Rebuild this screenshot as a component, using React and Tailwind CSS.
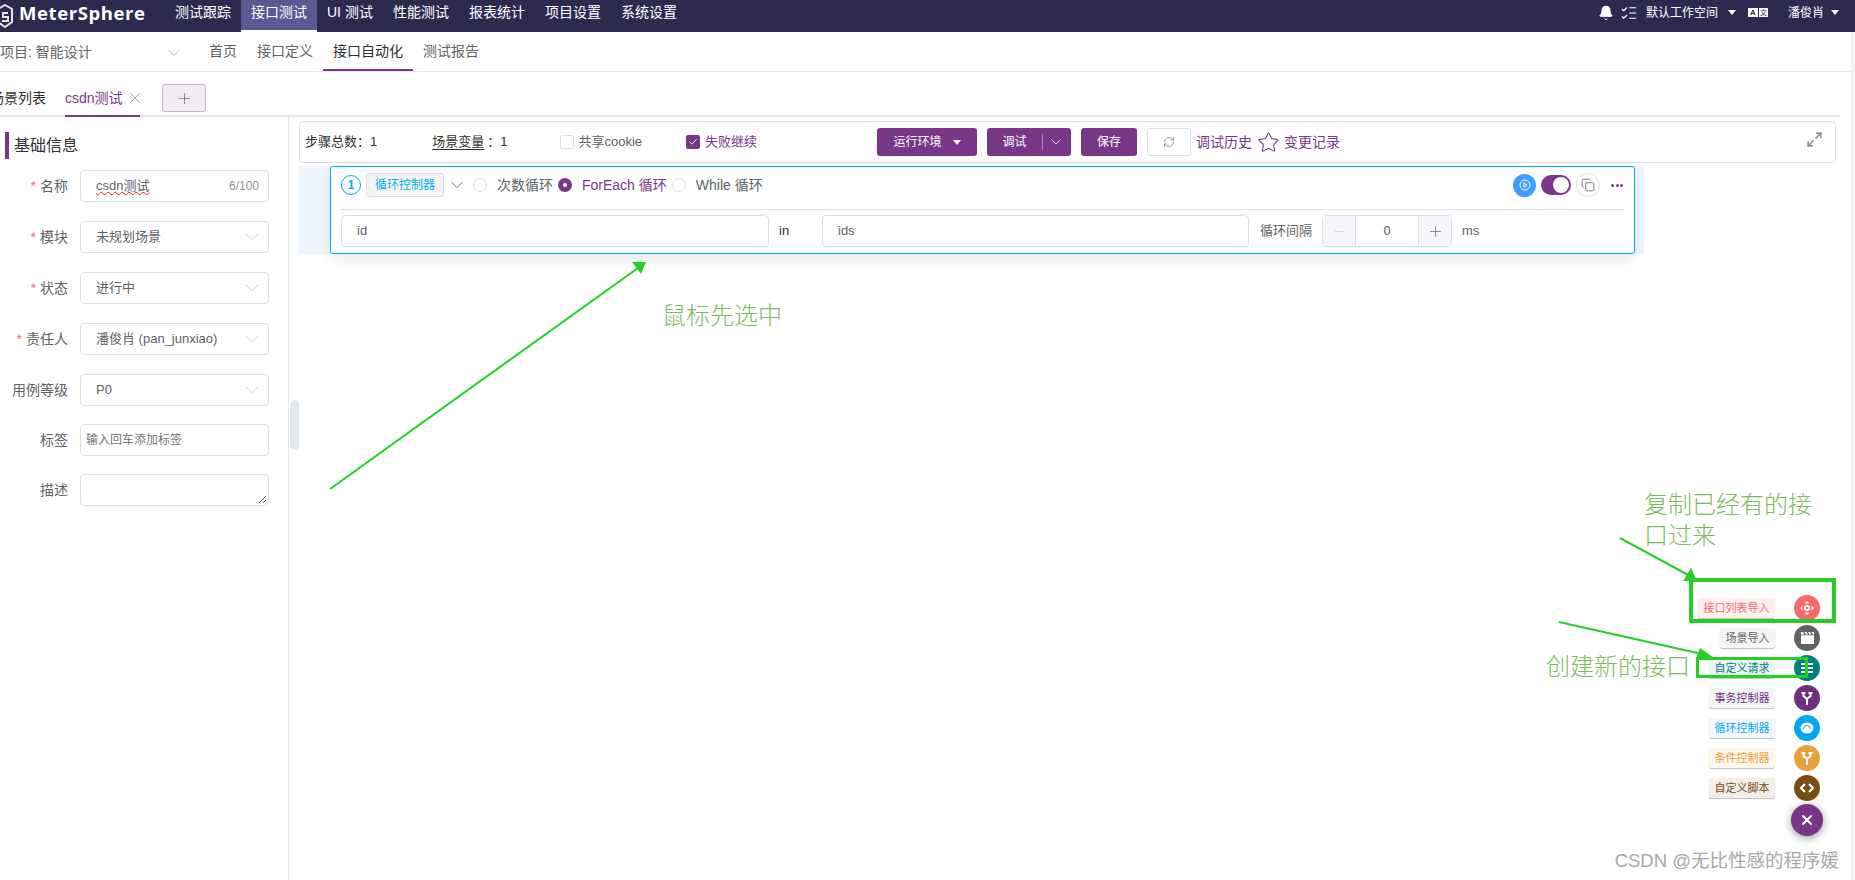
import React from "react";
import { Bell, ListChecks, ChevronDown, X, Plus, Minus, RefreshCw, Star, Copy, Check, Maximize2 } from "lucide-react";

const topNav = ["测试跟踪", "接口测试", "UI 测试", "性能测试", "报表统计", "项目设置", "系统设置"];
const subNav = ["首页", "接口定义", "接口自动化", "测试报告"];

const Caret = ({ className = "" }) => (
  <span className={"inline-block w-0 h-0 border-x-[4px] border-x-transparent border-t-[5px] " + className} />
);

const Field = ({ label, required, children }) => (
  <div className="flex items-center h-[32px]">
    <div className="w-[67px] text-right text-[14px] text-[#606266] whitespace-nowrap shrink-0">
      {required && <span className="text-[#f56c6c] mr-1">*</span>}
      {label}
    </div>
    <div className="ml-[12px] w-[189px] h-[32px] border border-[#dcdfe6] rounded flex items-center text-[13px] text-[#606266] shrink-0">
      {children}
    </div>
  </div>
);

const SelectField = ({ label, required, value }) => (
  <Field label={label} required={required}>
    <span className="pl-[15px] flex-1 whitespace-nowrap">{value}</span>
    <ChevronDown size={22} strokeWidth={0.8} className="mr-[5px] text-[#c0c4cc]" />
  </Field>
);

const Fab = ({ label, text, tagBg, bg, icon }) => (
  <div className="flex items-center justify-end h-[26px]">
    <span
      className="h-[20px] px-[5.5px] rounded-[2px] text-[11px] leading-[20px] shadow-[0_1px_1px_rgba(0,0,0,0.25)] whitespace-nowrap"
      style={{ color: text, background: tagBg }}
    >
      {label}
    </span>
    <span
      className="ml-[19px] w-[26px] h-[26px] rounded-full flex items-center justify-center"
      style={{ background: bg }}
    >
      {icon}
    </span>
  </div>
);

const forkIcon = (
  <svg width="14" height="14" viewBox="0 0 14 14" fill="none" stroke="#fff" strokeWidth="2">
    <path d="M1.5 2h4M8.5 2h4M3.5 2v3L7 8l3.5-3V2M7 8v6" />
  </svg>
);

const App = () => {
  return (
    <div className="relative w-[1855px] h-[880px] overflow-hidden bg-white flex flex-col font-['Liberation_Sans','Noto_Sans_CJK_SC',sans-serif]">
      {/* top bar */}
      <div className="h-[32px] bg-[#2e2a4f] flex items-center shrink-0 text-white text-[14px]">
        <div className="w-[165px] h-full flex items-center shrink-0 overflow-hidden pb-[7px]">
          <svg width="17" height="24" viewBox="0 0 17 24" fill="none" stroke="#e5e5e5" strokeWidth="2" className="-ml-[3px] shrink-0 mt-[6px]">
            <path d="M8 1l7 4v13l-7 5-7-5V5z" />
            <path d="M11 9H6v4h5v4H5" />
          </svg>
          <span className="ml-[5px] text-[18.5px] font-bold tracking-[0.6px] font-['Open_Sans','Liberation_Sans',sans-serif]">MeterSphere</span>
        </div>
        <div className="flex h-full">
          {topNav.map((n) => (
            <div
              key={n}
              className={
                "h-full px-[10px] flex items-center justify-center whitespace-nowrap " +
                (n === "接口测试" ? "bg-[#5b5892] border-b-2 border-white pb-[5px]" : "pb-[7px]")
              }
            >
              {n}
            </div>
          ))}
        </div>
        <div className="ml-auto flex items-center pr-[16px] pb-[7px] text-[12px]">
          <Bell size={16} fill="#fff" strokeWidth={1.5} />
          <ListChecks size={18} strokeWidth={1.5} className="ml-[6px]" />
          <span className="ml-[8px]">默认工作空间</span>
          <Caret className="ml-[10px] border-t-white" />
          <span className="ml-[12px] w-[10px] h-[9px] bg-white text-[#2e2a4f] text-[8px] leading-[9px] font-bold text-center">A</span>
          <span className="ml-[1px] w-[9px] h-[9px] bg-white text-[#2e2a4f] text-[7px] leading-[9px] text-center">文</span>
          <span className="ml-[20px]">潘俊肖</span>
          <Caret className="ml-[7px] border-t-white" />
        </div>
      </div>

      {/* sub nav */}
      <div className="h-[40px] flex items-stretch border-b border-[#e6e6e6] shrink-0 text-[14px]">
        <div className="w-[199px] flex items-center pt-[2px] text-[#606266] shrink-0">
          <span className="flex-1 whitespace-nowrap">项目: 智能设计</span>
          <ChevronDown size={20} strokeWidth={0.9} className="mr-[15px] text-[#a0a3a9]" />
        </div>
        <div className="flex">
          {subNav.map((n) => (
            <div
              key={n}
              className={
                "flex items-center pt-[2px] px-[10px] whitespace-nowrap border-b-2 " +
                (n === "接口自动化" ? "border-[#783887] text-[#303133]" : "border-transparent text-[#606266]")
              }
            >
              {n}
            </div>
          ))}
        </div>
      </div>

      {/* tabs */}
      <div className="h-[45px] shrink-0 flex items-stretch mr-[15px] border-b-2 border-[#e4e7ed] text-[14px]">
        <div className="flex items-center pt-[9px] -ml-[10px] text-[#303133] whitespace-nowrap">场景列表</div>
        <div className="ml-[19px] flex items-center pt-[9px] w-[75px] whitespace-nowrap text-[#783887] border-b-2 border-[#783887] -mb-[2px]">
          csdn测试
          <X size={18} strokeWidth={0.9} className="ml-[3px] shrink-0 text-[#8a6a92] -mr-[4px]" />
        </div>
        <div className="ml-[22px] mt-[12px] w-[44px] h-[28px] rounded-[3px] border border-[#c9afcf] bg-[#f2ebf3] flex items-center justify-center text-[#783887]">
          <Plus size={17} strokeWidth={0.9} />
        </div>
      </div>

      {/* body */}
      <div className="flex-1 flex min-h-0">
        {/* left form */}
        <div className="w-[289px] shrink-0 border-r border-[#e4e7ed] pt-[15px] pl-[1px] relative">
          <div className="ml-[4px] h-[27px] border-l-4 border-[#783887] pl-[5px] pt-[1px] flex items-center text-[16px] text-[#303133]">
            基础信息
          </div>
          <div className="mt-[11px] flex flex-col gap-[19px]">
            <Field label="名称" required>
              <span className="pl-[15px] flex-1 underline decoration-wavy decoration-[#e02020] decoration-1">csdn测试</span>
              <span className="pr-[9px] text-[12px] text-[#909399]">6/100</span>
            </Field>
            <SelectField label="模块" required value="未规划场景" />
            <SelectField label="状态" required value="进行中" />
            <SelectField label="责任人" required value="潘俊肖 (pan_junxiao)" />
            <SelectField label="用例等级" value="P0" />
          </div>
          <div className="mt-[18px] flex flex-col gap-[18px]">
            <Field label="标签">
              <span className="pl-[5px] text-[12px] text-[#757575]">输入回车添加标签</span>
            </Field>
            <Field label="描述">
              <svg width="9" height="9" viewBox="0 0 9 9" stroke="#555" className="ml-auto mt-auto mr-[1px] mb-[1px]">
                <path d="M1 8l7-7M5 8l3-3" />
              </svg>
            </Field>
          </div>
          {/* collapse handle */}
          <div className="absolute left-[290px] top-[283px] w-[9px] h-[50px] bg-[#e4e7ec] rounded-[5px]" />
        </div>

        {/* main */}
        <div className="flex-1 min-w-0 pl-[10px] pr-[19px] pt-[4px]">
          {/* toolbar */}
          <div className="h-[42px] border border-[#e0e0ea] rounded flex items-center pl-[5px] pr-[12px] text-[13px] text-[#303133]">
            <span className="whitespace-nowrap">步骤总数：1</span>
            <span className="ml-[55px] underline underline-offset-3 whitespace-nowrap">场景变量</span>
            <span className="ml-[3px] whitespace-nowrap">：1</span>
            <span className="ml-[53px] w-[14px] h-[14px] border border-[#dcdfe6] rounded-[2px] shrink-0" />
            <span className="ml-[4px] whitespace-nowrap text-[#606266]">共享cookie</span>
            <span className="ml-[44px] w-[14px] h-[14px] bg-[#783887] rounded-[2px] flex items-center justify-center shrink-0">
              <Check size={10} color="#fff" strokeWidth={2} />
            </span>
            <span className="ml-[5px] whitespace-nowrap text-[#783887]">失败继续</span>
            <div className="ml-[120px] w-[100px] h-[28px] bg-[#783887] rounded-[3px] text-white text-[12px] flex items-center justify-center gap-[11px]">
              运行环境
              <Caret className="border-t-white" />
            </div>
            <div className="ml-[10px] w-[84px] h-[28px] bg-[#783887] rounded-[3px] text-white text-[12px] flex items-center">
              <span className="w-[56px] text-center border-r border-[#a986b1] leading-[16px]">调试</span>
              <ChevronDown size={16} strokeWidth={1.1} className="ml-[5px]" />
            </div>
            <div className="ml-[10px] w-[56px] h-[28px] bg-[#783887] rounded-[3px] text-white text-[12px] flex items-center justify-center">保存</div>
            <div className="ml-[10px] w-[44px] h-[28px] border border-[#dcdfe6] rounded-[3px] flex items-center justify-center text-[#606266]">
              <RefreshCw size={12} strokeWidth={1.2} />
            </div>
            <span className="ml-[5px] whitespace-nowrap text-[#783887] text-[14px]">调试历史</span>
            <Star size={23} strokeWidth={1.1} className="ml-[5px] text-[#783887]" />
            <span className="ml-[4px] whitespace-nowrap text-[#783887] text-[14px]">变更记录</span>
            <Maximize2 size={17} strokeWidth={2.2} className="ml-auto -mt-[6px] text-[#909399]" />
          </div>

          {/* step card */}
          <div className="mt-[3px] w-[1345px] h-[88px] bg-[#eef5fd] pl-[31px]">
            <div className="w-[1305px] h-full bg-white border border-[#00aeef] rounded-[3px] shadow-[0_4px_12px_rgba(0,0,0,0.1)] px-[10px] text-[14px] text-[#606266]">
              <div className="h-[43px] pb-[6px] flex items-center border-b border-[#dcdfe6]">
                <span className="w-[20px] h-[20px] border border-[#00aeef] rounded-full text-[#00aeef] text-[12px] font-bold flex items-center justify-center shrink-0">1</span>
                <span className="ml-[5px] w-[78px] h-[24px] border border-[#e5d7e8] rounded-[3px] bg-[#f4f4f5] text-[#00aeef] text-[12px] flex items-center justify-center shrink-0">循环控制器</span>
                <ChevronDown size={20} strokeWidth={1.1} className="ml-[3px] shrink-0" />
                <span className="ml-[6px] w-[14px] h-[14px] border border-[#dcdfe6] rounded-full shrink-0" />
                <span className="ml-[10px] whitespace-nowrap">次数循环</span>
                <span className="ml-[5px] w-[14px] h-[14px] rounded-full bg-[#783887] flex items-center justify-center shrink-0">
                  <span className="w-[4px] h-[4px] rounded-full bg-white" />
                </span>
                <span className="ml-[10px] whitespace-nowrap text-[#783887]">ForEach 循环</span>
                <span className="ml-[5px] w-[14px] h-[14px] border border-[#dcdfe6] rounded-full shrink-0" />
                <span className="ml-[10px] whitespace-nowrap">While 循环</span>
                <span className="ml-auto w-[23px] h-[23px] rounded-full bg-[#409eff] flex items-center justify-center shrink-0">
                  <svg width="12" height="12" viewBox="0 0 12 12" fill="none" stroke="#fff">
                    <circle cx="6" cy="6" r="5" />
                    <path d="M5 3.8v4.4L8 6z" />
                  </svg>
                </span>
                <span className="ml-[5px] w-[30px] h-[20px] rounded-full bg-[#783887] flex items-center justify-end pr-[2px] shrink-0">
                  <span className="w-[16px] h-[16px] rounded-full bg-white" />
                </span>
                <span className="ml-[5px] w-[24px] h-[24px] rounded-full border border-[#dcdfe6] flex items-center justify-center shrink-0">
                  <Copy size={14} strokeWidth={1.4} />
                </span>
                <span className="ml-[11px] mr-[1px] flex gap-[1.5px]">
                  <span className="w-[3px] h-[3px] rounded-full bg-[#783887]" />
                  <span className="w-[3px] h-[3px] rounded-full bg-[#783887]" />
                  <span className="w-[3px] h-[3px] rounded-full bg-[#783887]" />
                </span>
              </div>
              <div className="mt-[5px] flex items-center h-[32px] text-[13px]">
                <div className="w-[428px] h-[32px] border border-[#dcdfe6] rounded flex items-center pl-[15px] shrink-0">id</div>
                <span className="ml-[10px] w-[43px] text-[#303133] shrink-0">in</span>
                <div className="w-[427px] h-[32px] border border-[#dcdfe6] rounded flex items-center pl-[15px] shrink-0">ids</div>
                <span className="ml-[11px] whitespace-nowrap">循环间隔</span>
                <div className="ml-[10px] w-[130px] h-[32px] border border-[#dcdfe6] rounded flex items-center shrink-0">
                  <span className="w-[33px] h-full bg-[#f5f7fa] border-r border-[#dcdfe6] flex items-center justify-center text-[#c0c4cc]"><Minus size={15} strokeWidth={1} /></span>
                  <span className="flex-1 text-center">0</span>
                  <span className="w-[33px] h-full bg-[#f5f7fa] border-l border-[#dcdfe6] flex items-center justify-center"><Plus size={17} strokeWidth={1} /></span>
                </div>
                <span className="ml-[10px]">ms</span>
              </div>
            </div>
          </div>
        </div>
      </div>

      {/* floating action menu */}
      <div className="absolute right-[32px] bottom-[44px] flex flex-col items-end">
        <div className="flex flex-col gap-[4px] mr-[3px]">
          <Fab label="接口列表导入" text="#f56c6c" tagBg="#fef0f0" bg="#f76b6b" icon={<svg width="14" height="14" viewBox="0 0 14 14" fill="#fff"><path d="M7 0l2.5 2.5h-5zM7 14l2.5-2.5h-5zM0 7l2.5-2.5v5zM14 7l-2.5-2.5v5z" /><circle cx="7" cy="7" r="3" /><circle cx="7" cy="7" r="1.3" fill="#f76b6b" /></svg>} />
          <Fab label="场景导入" text="#606266" tagBg="#f5f5f5" bg="#606266" icon={<svg width="13" height="12" viewBox="0 0 13 12" fill="#fff"><path d="M0 3.2h13V12H0zM0 0h2l1.5 2.4H0zM3.5 0h2L7 2.4H5zM7 0h2l1.5 2.4h-2zM10.5 0H13v2.4h-1z" /></svg>} />
          <Fab label="自定义请求" text="#008080" tagBg="#e9f5f5" bg="#008080" icon={<svg width="12" height="10" viewBox="0 0 12 10" fill="#fff"><path d="M0 0h4v2H0zM6 0h6v2H6zM0 4h4v2H0zM6 4h6v2H6zM0 8h4v2H0zM6 8h6v2H6z" /></svg>} />
          <Fab label="事务控制器" text="#6c317c" tagBg="#f5f5f5" bg="#6c317c" icon={forkIcon} />
          <Fab label="循环控制器" text="#02a7f0" tagBg="#f2f6fa" bg="#02a7f0" icon={<svg width="14" height="14" viewBox="0 0 14 14"><ellipse cx="7" cy="7" rx="6.5" ry="5.5" fill="#fff" /><path d="M3.5 8a3.5 3.5 0 0 1 7 0" fill="none" stroke="#02a7f0" /></svg>} />
          <Fab label="条件控制器" text="#e6a23c" tagBg="#fdf6ec" bg="#e6a23c" icon={forkIcon} />
          <Fab label="自定义脚本" text="#7b4d12" tagBg="#f2eee8" bg="#7b4d12" icon={<svg width="14" height="10" viewBox="0 0 14 10" fill="none" stroke="#fff" strokeWidth="2"><path d="M5 1L1 5l4 4M9 1l4 4-4 4" /></svg>} />
        </div>
        <div className="mt-[3px] w-[32px] h-[32px] rounded-full bg-[#783887] shadow-[0_2px_8px_rgba(0,0,0,0.4)] flex items-center justify-center">
          <X size={16} color="#fff" strokeWidth={3} />
        </div>
      </div>

      {/* annotations drawn over the screenshot */}
      <svg className="absolute left-0 top-0 pointer-events-none" width="1855" height="880" fill="none">
        <path d="M330 489L638 268" stroke="#26cf26" strokeWidth="2" />
        <path d="M646 262l-14 0 9 12z" fill="#26cf26" />
        <path d="M1620 538l70 38" stroke="#26cf26" strokeWidth="2" />
        <path d="M1697 581l-14 0 8 -13z" fill="#26cf26" />
        <path d="M1559 622l143 32" stroke="#26cf26" strokeWidth="2" />
        <path d="M1713 657l-17 2 4 -11z" fill="#26cf26" />
        <rect x="1691" y="580" width="143" height="41" stroke="#26cf26" strokeWidth="4" />
        <rect x="1697.5" y="658.5" width="109" height="18" stroke="#26cf26" strokeWidth="3" />
      </svg>
      <div className="absolute left-[662px] top-[299px] text-[24px] leading-[30px] text-[#7dbb5e] font-['Noto_Sans_CJK_SC',sans-serif] font-light whitespace-nowrap">鼠标先选中</div>
      <div className="absolute left-[1644px] top-[487px] w-[170px] text-[24px] leading-[31px] text-[#7dbb5e] font-['Noto_Sans_CJK_SC',sans-serif] font-light">复制已经有的接口过来</div>
      <div className="absolute left-[1546px] top-[650px] text-[24px] leading-[30px] text-[#7dbb5e] font-['Noto_Sans_CJK_SC',sans-serif] font-light whitespace-nowrap">创建新的接口</div>
      <div className="absolute right-[16px] bottom-[5px] text-[18.5px] leading-[28px] text-[#a8a8a8] whitespace-nowrap">CSDN @无比性感的程序媛</div>

      {/* scrollbar edge */}
      <div className="absolute right-0 top-[32px] bottom-0 w-[4px] bg-[#f1f1f1]" />
    </div>
  );
};

export default App;
